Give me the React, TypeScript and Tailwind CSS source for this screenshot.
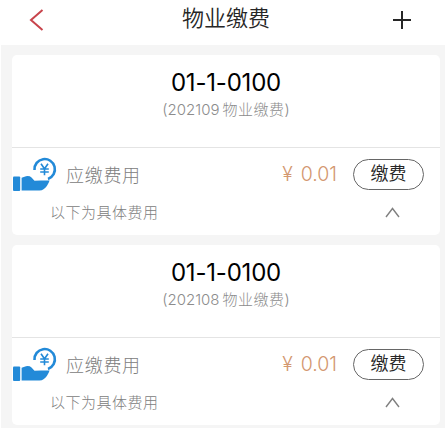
const bills = [
  { id: "202109", room: "01-1-0100", amount: "0.01" },
  { id: "202108", room: "01-1-0100", amount: "0.01" },
];

const PayIcon = () => (
  <svg width="46" height="36" viewBox="0 0 46 36" className="block shrink-0">
    <rect x="1" y="20.5" width="7.2" height="14.5" rx="1" fill="#238ad8" />
    <path
      d="M9.6 21.8 L14 20.2 Q17.5 19.6 19.5 21.5 L22.5 24.8 L29 24.4 L37.6 24.5 Q35.5 30.5 31.5 33.3 Q30 34.5 27.5 34.5 H9.6 Z"
      fill="#238ad8"
    />
    <path
      d="M22.5 14 A10.2 10.2 0 1 1 36 22.9"
      fill="none"
      stroke="#238ad8"
      strokeWidth="2.6"
    />
    <path
      d="M29 7.8 L32.5 12.8 L36 7.8 M32.5 12.8 V19.2 M28.2 13 H36.8 M28.2 16 H36.8"
      fill="none"
      stroke="#238ad8"
      strokeWidth="1.6"
    />
  </svg>
);

const Header = () => (
  <header className="flex h-[45px] items-center bg-white">
    <button className="flex w-[110px] pl-[29px]" aria-label="返回">
      <svg width="16" height="24" viewBox="0 0 16 24" className="mt-[-6px]">
        <path
          d="M13.5 2 L2 12 L13.5 22"
          fill="none"
          stroke="#c8444c"
          strokeWidth="2"
        />
      </svg>
    </button>
    <h1 className="mt-[-10px] flex-1 pl-[7px] text-center text-[22px] leading-[30px] font-[350] text-[#262626]">
      物业缴费
    </h1>
    <button className="flex w-[110px] justify-end pr-[34px]" aria-label="添加">
      <svg width="18" height="18" viewBox="0 0 18 18" className="mt-[-6px]">
        <path d="M9 0 V18 M0 9 H18" stroke="#262626" strokeWidth="2" />
      </svg>
    </button>
  </header>
);

const BillCard = ({ id, room, amount }: (typeof bills)[number]) => (
  <section className="h-[180px] rounded-[5px] bg-white">
    <div className="flex h-[93px] flex-col items-center border-b border-[#e4e4e4] pt-[14px]">
      <h2 className="text-[24px] leading-[28px] font-normal tracking-[-0.2px] text-black">
        {room}
      </h2>
      <p className="flex items-center text-[15px] leading-[26px] text-[#8c8c8c]">
        <span>({id}</span>
        <span className="ml-[3px] tracking-[0.5px]">物业缴费</span>
        <span>)</span>
      </p>
    </div>
    <div className="flex h-[52px] items-center pr-[16px]">
      <PayIcon />
      <span className="ml-[8px] pt-[4px] text-[18px] leading-[26px] tracking-[0.7px] text-[#808080]">
        应缴费用
      </span>
      <span className="ml-auto flex gap-[8px] text-[19.5px] leading-[26px] font-[350] text-[#d3976f]">
        <span>¥</span>
        <span>{amount}</span>
      </span>
      <button className="ml-[16px] h-[31px] w-[71px] rounded-full border border-[#666] text-[18px] leading-[26px] font-[350] text-[#262626]">
        缴费
      </button>
    </div>
    <div className="flex h-[26px] items-center justify-between pr-[40px] pl-[38px]">
      <span className="text-[15px] tracking-[0.5px] text-[#808080]">
        以下为具体费用
      </span>
      <svg width="15" height="11" viewBox="0 0 15 11" className="mt-[-2px]">
        <path
          d="M1 10 L7.5 1.5 L14 10"
          fill="none"
          stroke="#808080"
          strokeWidth="1.4"
        />
      </svg>
    </div>
  </section>
);

export default function App() {
  return (
    <main className="h-[428px] overflow-hidden bg-white font-['Inter','Noto_Sans_CJK_SC',sans-serif] font-light">
      <Header />
      <div className="ml-px flex h-[383px] flex-col gap-[10px] bg-[#f5f5f5] pt-[10px] pr-[5px] pl-[11px]">
        {bills.map((bill) => (
          <BillCard key={bill.id} {...bill} />
        ))}
      </div>
    </main>
  );
}
